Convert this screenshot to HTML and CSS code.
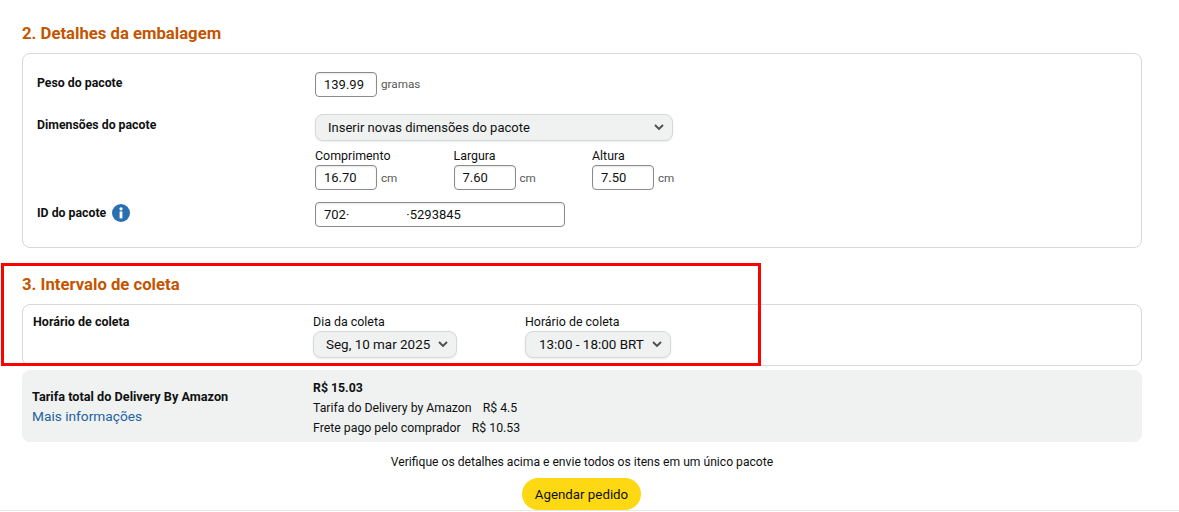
FILE: index.html
```html
<!DOCTYPE html>
<html lang="pt-BR">
<head>
<meta charset="utf-8">
<title>Agendar pedido</title>
<link rel="stylesheet" href="styles.css">
</head>
<body>
<main class="page">
  <h2 class="heading first">2. Detalhes da embalagem</h2>
  <section class="panel package">
    <div class="row weight">
      <div class="label">Peso do pacote</div>
      <div class="value inline">
        <span class="input short">139.99</span><span class="unit">gramas</span>
      </div>
    </div>
    <div class="row dims">
      <div class="label">Dimensões do pacote</div>
      <div class="value">
        <div class="select wide"><span>Inserir novas dimensões do pacote</span>
          <svg class="chev" viewBox="0 0 10 7"><path d="M1 1l4 4 4-4"/></svg></div>
        <div class="dim-grid">
          <div class="dim"><div class="cap">Comprimento</div><div class="inline"><span class="input short">16.70</span><span class="unit">cm</span></div></div>
          <div class="dim"><div class="cap">Largura</div><div class="inline"><span class="input short">7.60</span><span class="unit">cm</span></div></div>
          <div class="dim"><div class="cap">Altura</div><div class="inline"><span class="input short">7.50</span><span class="unit">cm</span></div></div>
        </div>
      </div>
    </div>
    <div class="row id">
      <div class="label with-icon">ID do pacote
        <svg class="info" viewBox="0 0 18 18"><circle cx="9" cy="9" r="9" fill="#2a6fb0"/><rect x="7.6" y="7.4" width="2.8" height="7" fill="#fff"/><circle cx="9" cy="4.8" r="1.6" fill="#fff"/></svg>
      </div>
      <div class="value"><span class="input long">702·<span class="mask"></span>·5293845</span></div>
    </div>
  </section>

  <h2 class="heading second">3. Intervalo de coleta</h2>
  <section class="panel pickup">
    <div class="label pickup-label">Horário de coleta</div>
    <div class="pick-col day">
      <div class="cap">Dia da coleta</div>
      <div class="select small"><span>Seg, 10 mar 2025</span><svg class="chev" viewBox="0 0 10 7"><path d="M1 1l4 4 4-4"/></svg></div>
    </div>
    <div class="pick-col">
      <div class="cap">Horário de coleta</div>
      <div class="select small time"><span>13:00 - 18:00 BRT</span><svg class="chev" viewBox="0 0 10 7"><path d="M1 1l4 4 4-4"/></svg></div>
    </div>
  </section>

  <section class="fee">
    <div class="fee-left">
      <div class="label fee-title">Tarifa total do Delivery By Amazon</div>
      <a class="link">Mais informações</a>
    </div>
    <div class="fee-right">
      <div class="label">R$ 15.03</div>
      <div class="fee-line"><span>Tarifa do Delivery by Amazon</span><span>R$ 4.5</span></div>
      <div class="fee-line"><span>Frete pago pelo comprador</span><span>R$ 10.53</span></div>
    </div>
  </section>

  <p class="verify">Verifique os detalhes acima e envie todos os itens em um único pacote</p>
  <div class="action"><button class="btn">Agendar pedido</button></div>
  <div class="red-box"></div>
</main>
</body>
</html>
```
FILE: styles.css
```css
* { box-sizing: border-box; }
html, body { margin: 0; padding: 0; }
body {
  width: 1179px; height: 512px; overflow: hidden; background: #fff;
  font-family: Roboto, "Liberation Sans", sans-serif; font-size: 12px; color: #0f1111;
}
.page { position: relative; width: 1179px; height: 511px; padding: 0 37px 0 22px; border-bottom: 1px solid #e7e7e7; }
.heading { margin: 0; font-size: 16.7px; font-weight: 700; line-height: 20px; color: #c45500; }
.heading.first { padding-top: 24px; height: 53px; }
.heading.second { margin-top: 26px; padding-top: 1px; height: 30px; }
.panel { border: 1px solid #d5d9d9; border-radius: 8px; background: #fff; }
.package { height: 195px; padding: 18px 14px 0; }
.row { display: flex; }
.label { font-weight: 700; font-size: 12.3px; line-height: 18px; }
.row > .label { width: 278px; flex: none; padding-top: 2px; }
.weight { height: 42px; }
.dims { height: 88px; }
.id .label { padding-top: 0; }
.with-icon { display: flex; align-items: center; gap: 6px; height: 21px; }
.info { width: 18px; height: 18px; }
.inline { display: flex; align-items: center; }
.value.inline { align-items: flex-start; }
.value.inline .unit { line-height: 25px; }
.input {
  display: inline-flex; align-items: center; height: 25px; padding: 0 8px;
  border: 1px solid #888c8c; border-radius: 4px; font-size: 13px; background: #fff; box-shadow: inset 0 1px 2px rgba(15,17,17,.1);
}
.input.short { width: 62px; }
.input.long { width: 250px; }
.mask { display: inline-block; width: 57px; }
.unit { margin-left: 4px; font-size: 11.7px; color: #565959; }
.select {
  display: flex; align-items: center; justify-content: space-between; height: 27px;
  border: 1px solid #d5d9d9; border-radius: 8px; background: #f0f2f2; font-size: 13px;
  box-shadow: 0 1px 2px rgba(213,217,217,.5);
}
.select.wide { width: 358px; padding: 0 8px 0 12px; }
.select.small { display: inline-flex; gap: 8px; padding: 0 8px 0 12px; font-size: 13.45px; }
.select.small.time { padding-left: 13px; }
.chev { width: 10px; height: 7px; fill: none; stroke: #4a4f4f; stroke-width: 1.9; }
.dim-grid { display: flex; margin-top: 7px; }
.dim { width: 138.5px; }
.cap { font-size: 12.4px; line-height: 16px; margin-bottom: 1px; }
.pickup { display: flex; height: 62px; padding: 9px 10px 0; }
.pickup-label { width: 280px; line-height: 16px; font-size: 12.5px; }
.pick-col { width: 212px; }
.fee { display: flex; height: 72px; margin-top: 4px; padding: 0 10px; border-radius: 8px; background: #f0f2f2; }
.fee-left { width: 281px; padding-top: 18px; }
.fee-title { font-size: 12.7px; }
.link { display: block; font-size: 13.7px; line-height: 20px; color: #2162a1; }
.fee-right { padding-top: 8px; font-size: 12.3px; }
.fee-line { display: flex; gap: 11px; line-height: 20px; }
.fee-right .label { line-height: 20px; }
.verify { margin: 12px 0 0; text-align: center; line-height: 16px; font-size: 12.13px; }
.action { display: flex; justify-content: center; margin-top: 8px; padding-right: 1px; }
.btn { width: 119px; height: 32px; padding: 0; border: 0; border-radius: 16px; background: #ffd814; color: #0f1111; font: 13.3px Roboto, sans-serif; }
.red-box { position: absolute; left: 1px; top: 263px; width: 760px; height: 103px; border: 3px solid #f00; pointer-events: none; }
```
